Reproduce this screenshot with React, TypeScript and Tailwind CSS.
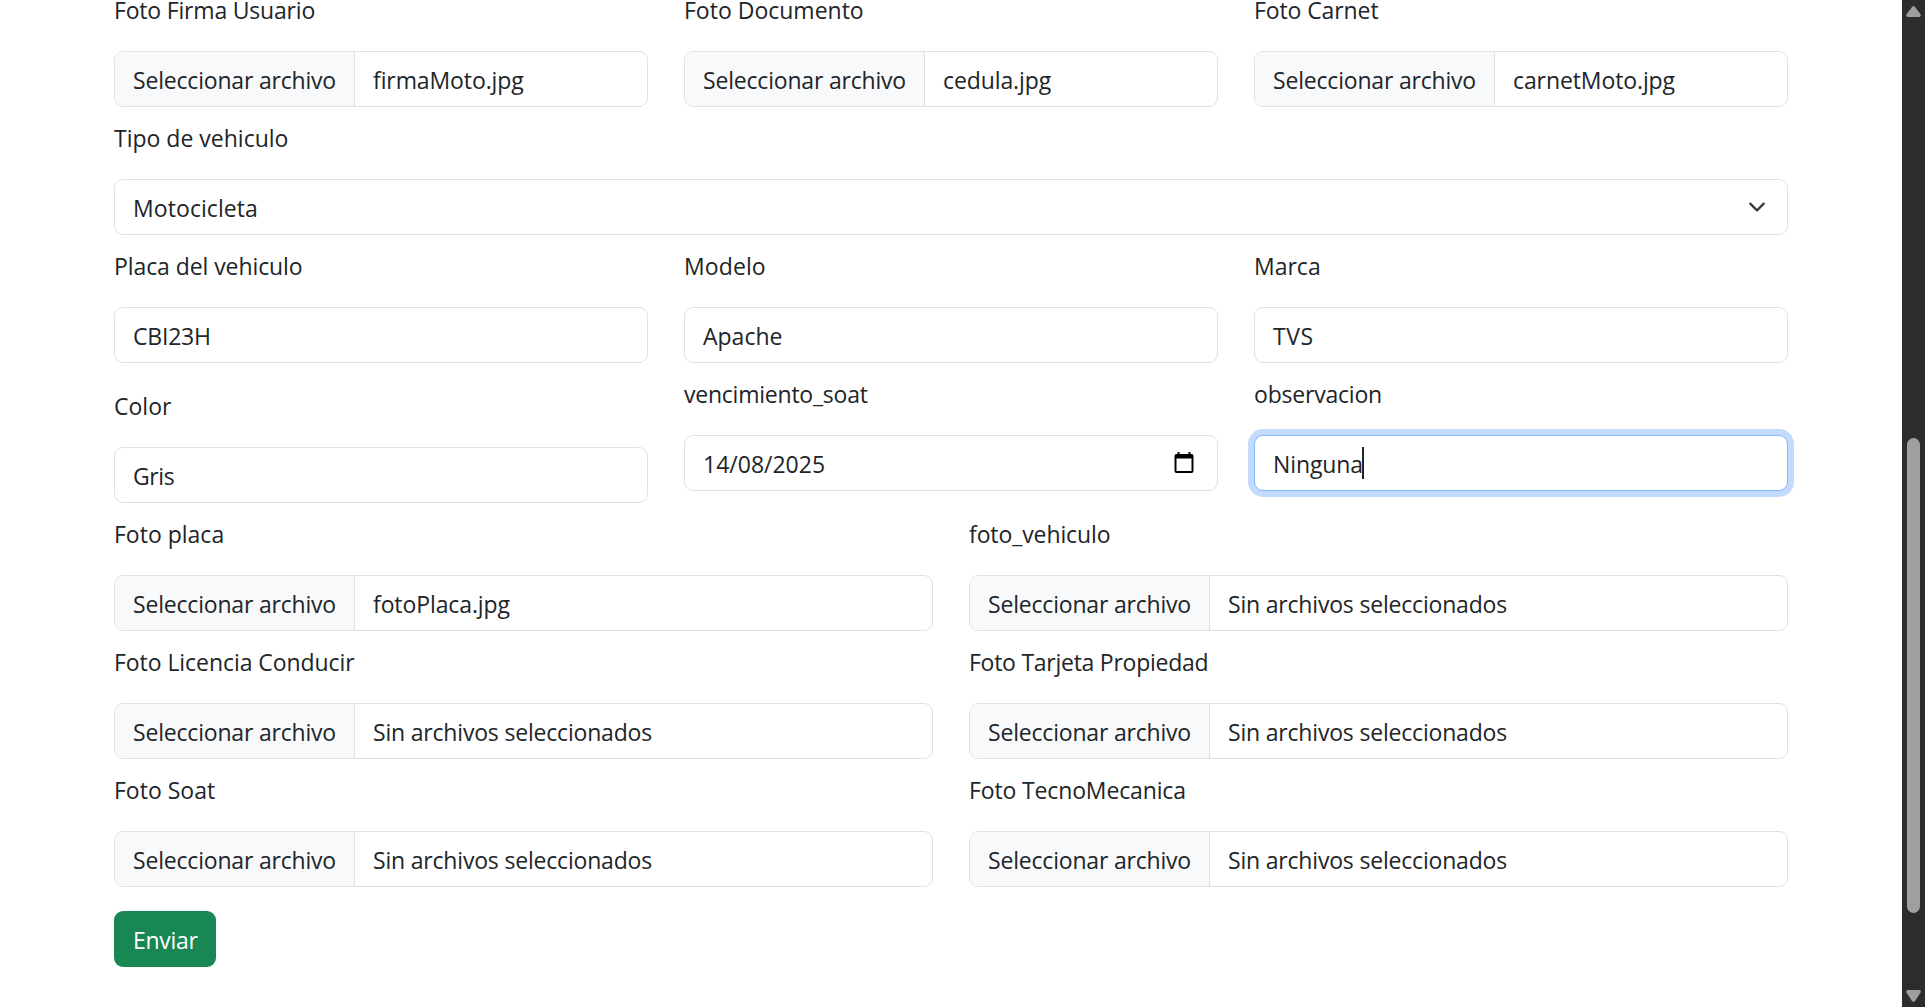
import type { ReactNode } from "react";

const box = "h-14 rounded-[9px] border border-[#dee2e6] bg-white flex items-center overflow-hidden";

function Text({ children, className = "" }: { children: ReactNode; className?: string }) {
  return <span className={`block whitespace-pre leading-9 ${className}`}>{children}</span>;
}

function Field({ label, labelClass = "", low = false, children }: { label: string; labelClass?: string; low?: boolean; children: ReactNode }) {
  return (
    <div className={low ? "pt-3" : ""}>
      <label className="mb-[23px] block h-9">
        <Text className={labelClass}>{label}</Text>
      </label>
      {children}
    </div>
  );
}

function FileInput({ name }: { name?: string }) {
  return (
    <div className={box}>
      <div className="flex h-full w-[240px] shrink-0 items-center border-r border-[#dee2e6] bg-[#f8f9fa] pl-[18px] pt-[2px]">
        <Text className="tracking-[-0.19px]">Seleccionar archivo</Text>
      </div>
      <div className="pl-[18px] pt-[2px]">
        {name ? <Text className="tracking-[-0.1px]">{name}</Text> : <Text className="tracking-[-0.19px]">Sin archivos seleccionados</Text>}
      </div>
    </div>
  );
}

function TextInput({ value, className = "" }: { value: string; className?: string }) {
  return (
    <div className={`${box} pl-[18px] pt-[2px]`}>
      <Text className={className}>{value}</Text>
    </div>
  );
}

function Scrollbar() {
  return (
    <div className="flex w-[23px] shrink-0 flex-col items-center bg-[#2c2c2c] pt-[6px] pb-[5px]">
      <svg width="15" height="11" viewBox="0 0 15 11" fill="#9f9f9f">
        <path d="M6 1Q7.500-.8 9 1L14.500 8.300Q15.500 11 13 11H2Q-.5 11 .5 8.300Z" />
      </svg>
      <div className="mt-[421px] h-[475px] w-[13px] rounded-full bg-[#9f9f9f]" />
      <div className="grow" />
      <svg width="15" height="12" viewBox="0 0 15 12" fill="#9f9f9f">
        <path d="M6 11Q7.500 12.800 9 11L14.500 2.700Q15.500 0 13 0H2Q-.5 0 .5 2.700Z" />
      </svg>
    </div>
  );
}

export default function App() {
  return (
    <div className="flex h-[1007px] w-[1925px] overflow-hidden bg-white font-['Open_Sans',sans-serif] text-[23px] text-[#212529]">
      <main className="flex grow flex-col gap-[13px] pr-[114px] pl-[114px]">
        <div className="-mt-2 grid grid-cols-3 gap-x-9">
          <Field label="Foto Firma Usuario" labelClass="tracking-[-0.19px]"><FileInput name="firmaMoto.jpg" /></Field>
          <Field label="Foto Documento"><FileInput name="cedula.jpg" /></Field>
          <Field label="Foto Carnet" labelClass="tracking-[-0.1px]"><FileInput name="carnetMoto.jpg" /></Field>
        </div>
        <Field label="Tipo de vehiculo">
          <div className={`${box} justify-between pr-[21px] pl-[18px]`}>
            <Text className="pt-[2px] tracking-[0.08px]">Motocicleta</Text>
            <svg width="18" height="18" viewBox="0 0 16 16" fill="none" stroke="#343a40" strokeWidth="2" strokeLinecap="round" strokeLinejoin="round">
              <path d="m2 5 6 6 6-6" />
            </svg>
          </div>
        </Field>
        <div className="grid grid-cols-3 gap-x-9">
          <Field label="Placa del vehiculo" labelClass="tracking-[-0.08px]"><TextInput value="CBI23H" className="tracking-[-0.2px]" /></Field>
          <Field label="Modelo" labelClass="tracking-[0.1px]"><TextInput value="Apache" /></Field>
          <Field label="Marca"><TextInput value="TVS" className="tracking-[0.5px]" /></Field>
        </div>
        <div className="grid grid-cols-3 gap-x-9">
          <Field label="Color" low><TextInput value="Gris" className="tracking-[-0.4px]" /></Field>
          <Field label="vencimiento_soat" labelClass="tracking-[-0.23px]">
            <div className={`${box} justify-between pr-[23px] pl-[18px]`}>
              <Text className="pt-[2px]">14/08/2025</Text>
              <svg width="20" height="21" viewBox="0 0 20 21" className="mb-[1px]">
                <path fill="#000" fillRule="evenodd" d="M3.500 0h2v2h9V0h2v2h1a2 2 0 0 1 2 2v15a2 2 0 0 1-2 2h-15a2 2 0 0 1-2-2V4a2 2 0 0 1 2-2h1zM2.500 6.500V19h15V6.500z" />
              </svg>
            </div>
          </Field>
          <Field label="observacion" labelClass="tracking-[-0.2px]">
            <div className="flex h-14 items-center rounded-[9px] border border-[#86b7fe] bg-white pl-[18px] shadow-[0_0_0_6px_#c2dbfe]">
              <Text className="pt-[2px] tracking-[-0.1px]">Ninguna</Text>
              <div className="-ml-px h-8 w-[2px] bg-[#212529]" />
            </div>
          </Field>
        </div>
        <div className="grid grid-cols-2 gap-x-9 gap-y-[13px]">
          <Field label="Foto placa"><FileInput name="fotoPlaca.jpg" /></Field>
          <Field label="foto_vehiculo" labelClass="tracking-[-0.1px]"><FileInput /></Field>
          <Field label="Foto Licencia Conducir" labelClass="tracking-[-0.06px]"><FileInput /></Field>
          <Field label="Foto Tarjeta Propiedad" labelClass="tracking-[-0.26px]"><FileInput /></Field>
          <Field label="Foto Soat"><FileInput /></Field>
          <Field label="Foto TecnoMecanica" labelClass="tracking-[-0.14px]"><FileInput /></Field>
        </div>
        <button className="mt-[11px] flex h-14 w-[102px] items-center rounded-[9px] bg-[#198754] pt-[2px] pl-[19px] text-white">
          <Text className="tracking-[-0.3px]">Enviar</Text>
        </button>
      </main>
      <Scrollbar />
    </div>
  );
}
